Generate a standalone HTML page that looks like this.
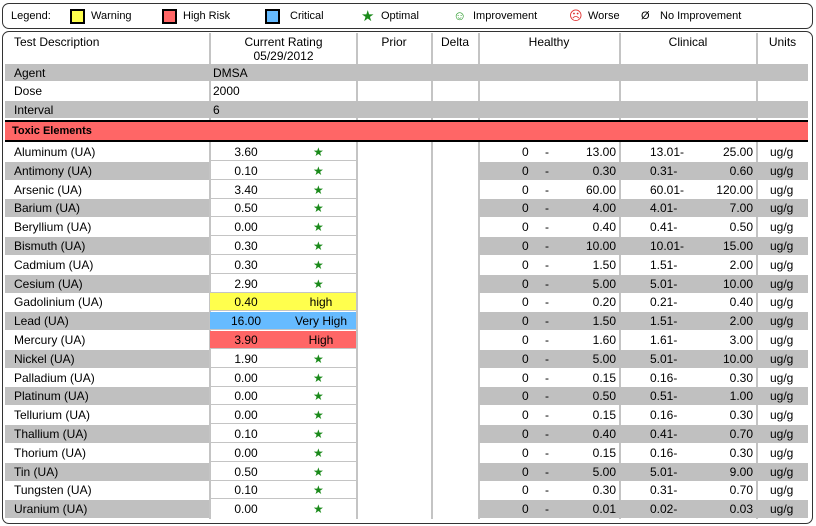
<!DOCTYPE html>
<html><head><meta charset="utf-8"><style>
*{margin:0;padding:0;box-sizing:border-box}
body{width:816px;height:526px;background:#fff;font-family:"Liberation Sans",Arial,sans-serif;font-size:12px;color:#000;position:relative;overflow:hidden}
.a{position:absolute}
.leg{left:2px;top:3px;width:811px;height:26px;border:1px solid #333;border-radius:7px}
.li{position:absolute;top:6px;font-size:11px}
.sw{position:absolute;top:5px;width:15px;height:15px;border:2px solid #000}
.frame{left:2px;top:31px;width:811px;height:493px;border:1px solid #333;border-radius:7px}
.vl{position:absolute;top:33px;height:486px;width:2px;background:#c4c4c4}
.r{position:absolute;left:5px;width:803px;height:19px}
.c{position:absolute;top:0;height:18px;line-height:18px;white-space:nowrap}
.g{background:#c0c0c0}
.nm{left:0;width:204px;padding-left:9px}
.rt{left:205px;width:146px;border-bottom:1px solid #c4c4c4}
.v{position:absolute;left:0;width:72px;text-align:center}
.st{position:absolute;left:103px;width:2px;color:#1a8a1a;font-size:12px}
.tx{position:absolute;left:75px;width:72px;text-align:center}
.rg{left:474px;width:329px}
.h0{position:absolute;left:43px}
.hd{position:absolute;left:66px}
.hh{position:absolute;right:192px;text-align:right}
.cl{position:absolute;left:171px}
.ch{position:absolute;right:55px;text-align:right}
.u{position:absolute;left:291px}
</style></head><body>
<div class="a leg">
<span class="li" style="left:8px">Legend:</span>
<span class="sw" style="left:67px;background:#ffff4d"></span><span class="li" style="left:88px">Warning</span>
<span class="sw" style="left:159px;background:#ff6666"></span><span class="li" style="left:180px">High Risk</span>
<span class="sw" style="left:262px;background:#66bbff"></span><span class="li" style="left:287px">Critical</span>
<span class="li" style="left:358px;color:#1a8a1a;font-size:15px;top:3px">★</span><span class="li" style="left:378px">Optimal</span>
<span class="li" style="left:450px;color:#2a9a2a;font-size:13px;top:4px">☺</span><span class="li" style="left:470px">Improvement</span>
<span class="li" style="left:566px;color:#e03030;font-size:13px;top:4px">☹</span><span class="li" style="left:585px">Worse</span>
<span class="li" style="left:638px">Ø</span><span class="li" style="left:657px">No Improvement</span>
</div>
<div class="a frame"></div>
<div class="vl" style="left:209px"></div>
<div class="vl" style="left:356px"></div>
<div class="vl" style="left:431px"></div>
<div class="vl" style="left:478px"></div>
<div class="vl" style="left:619px"></div>
<div class="vl" style="left:756px"></div>
<div class="a" style="left:14px;top:35px">Test Description</div>
<div class="a" style="left:211px;top:35px;width:145px;text-align:center;line-height:14px">Current Rating<br>05/29/2012</div>
<div class="a" style="left:357px;top:35px;width:74px;text-align:center">Prior</div>
<div class="a" style="left:432px;top:35px;width:46px;text-align:center">Delta</div>
<div class="a" style="left:479px;top:35px;width:140px;text-align:center">Healthy</div>
<div class="a" style="left:620px;top:35px;width:136px;text-align:center">Clinical</div>
<div class="a" style="left:757px;top:35px;width:51px;text-align:center">Units</div>
<div class="a g" style="left:5px;top:64px;width:803px;height:17px"></div>
<div class="a g" style="left:5px;top:101px;width:803px;height:17px"></div>
<div class="a" style="left:14px;top:66px">Agent</div><div class="a" style="left:213px;top:66px">DMSA</div>
<div class="a" style="left:14px;top:84px">Dose</div><div class="a" style="left:213px;top:84px">2000</div>
<div class="a" style="left:14px;top:103px">Interval</div><div class="a" style="left:213px;top:103px">6</div>
<div class="a" style="left:5px;top:120px;width:803px;height:22px;background:#ff6666;border-top:2px solid #000;border-bottom:2px solid #000;font-weight:bold;font-size:11px;line-height:18px;padding-left:7px;z-index:2">Toxic Elements</div>

<div class="r" style="top:143px"><div class="c nm">Aluminum (UA)</div><div class="c rt"><span class="v">3.60</span><span class="st">★</span></div><div class="c rg"><span class="h0">0</span><span class="hd">-</span><span class="hh">13.00</span><span class="cl">13.01-</span><span class="ch">25.00</span><span class="u">ug/g</span></div></div>
<div class="r" style="top:161.8px"><div class="c nm g">Antimony (UA)</div><div class="c rt"><span class="v">0.10</span><span class="st">★</span></div><div class="c rg g"><span class="h0">0</span><span class="hd">-</span><span class="hh">0.30</span><span class="cl">0.31-</span><span class="ch">0.60</span><span class="u">ug/g</span></div></div>
<div class="r" style="top:180.6px"><div class="c nm">Arsenic (UA)</div><div class="c rt"><span class="v">3.40</span><span class="st">★</span></div><div class="c rg"><span class="h0">0</span><span class="hd">-</span><span class="hh">60.00</span><span class="cl">60.01-</span><span class="ch">120.00</span><span class="u">ug/g</span></div></div>
<div class="r" style="top:199.4px"><div class="c nm g">Barium (UA)</div><div class="c rt"><span class="v">0.50</span><span class="st">★</span></div><div class="c rg g"><span class="h0">0</span><span class="hd">-</span><span class="hh">4.00</span><span class="cl">4.01-</span><span class="ch">7.00</span><span class="u">ug/g</span></div></div>
<div class="r" style="top:218.2px"><div class="c nm">Beryllium (UA)</div><div class="c rt"><span class="v">0.00</span><span class="st">★</span></div><div class="c rg"><span class="h0">0</span><span class="hd">-</span><span class="hh">0.40</span><span class="cl">0.41-</span><span class="ch">0.50</span><span class="u">ug/g</span></div></div>
<div class="r" style="top:237px"><div class="c nm g">Bismuth (UA)</div><div class="c rt"><span class="v">0.30</span><span class="st">★</span></div><div class="c rg g"><span class="h0">0</span><span class="hd">-</span><span class="hh">10.00</span><span class="cl">10.01-</span><span class="ch">15.00</span><span class="u">ug/g</span></div></div>
<div class="r" style="top:255.8px"><div class="c nm">Cadmium (UA)</div><div class="c rt"><span class="v">0.30</span><span class="st">★</span></div><div class="c rg"><span class="h0">0</span><span class="hd">-</span><span class="hh">1.50</span><span class="cl">1.51-</span><span class="ch">2.00</span><span class="u">ug/g</span></div></div>
<div class="r" style="top:274.6px"><div class="c nm g">Cesium (UA)</div><div class="c rt"><span class="v">2.90</span><span class="st">★</span></div><div class="c rg g"><span class="h0">0</span><span class="hd">-</span><span class="hh">5.00</span><span class="cl">5.01-</span><span class="ch">10.00</span><span class="u">ug/g</span></div></div>
<div class="r" style="top:293.4px"><div class="c nm">Gadolinium (UA)</div><div class="c rt" style="background:#ffff4d"><span class="v">0.40</span><span class="tx">high</span></div><div class="c rg"><span class="h0">0</span><span class="hd">-</span><span class="hh">0.20</span><span class="cl">0.21-</span><span class="ch">0.40</span><span class="u">ug/g</span></div></div>
<div class="r" style="top:312.2px"><div class="c nm g">Lead (UA)</div><div class="c rt" style="background:#66bbff"><span class="v">16.00</span><span class="tx">Very High</span></div><div class="c rg g"><span class="h0">0</span><span class="hd">-</span><span class="hh">1.50</span><span class="cl">1.51-</span><span class="ch">2.00</span><span class="u">ug/g</span></div></div>
<div class="r" style="top:331px"><div class="c nm">Mercury (UA)</div><div class="c rt" style="background:#ff6666"><span class="v">3.90</span><span class="tx">High</span></div><div class="c rg"><span class="h0">0</span><span class="hd">-</span><span class="hh">1.60</span><span class="cl">1.61-</span><span class="ch">3.00</span><span class="u">ug/g</span></div></div>
<div class="r" style="top:349.8px"><div class="c nm g">Nickel (UA)</div><div class="c rt"><span class="v">1.90</span><span class="st">★</span></div><div class="c rg g"><span class="h0">0</span><span class="hd">-</span><span class="hh">5.00</span><span class="cl">5.01-</span><span class="ch">10.00</span><span class="u">ug/g</span></div></div>
<div class="r" style="top:368.6px"><div class="c nm">Palladium (UA)</div><div class="c rt"><span class="v">0.00</span><span class="st">★</span></div><div class="c rg"><span class="h0">0</span><span class="hd">-</span><span class="hh">0.15</span><span class="cl">0.16-</span><span class="ch">0.30</span><span class="u">ug/g</span></div></div>
<div class="r" style="top:387.4px"><div class="c nm g">Platinum (UA)</div><div class="c rt"><span class="v">0.00</span><span class="st">★</span></div><div class="c rg g"><span class="h0">0</span><span class="hd">-</span><span class="hh">0.50</span><span class="cl">0.51-</span><span class="ch">1.00</span><span class="u">ug/g</span></div></div>
<div class="r" style="top:406.2px"><div class="c nm">Tellurium (UA)</div><div class="c rt"><span class="v">0.00</span><span class="st">★</span></div><div class="c rg"><span class="h0">0</span><span class="hd">-</span><span class="hh">0.15</span><span class="cl">0.16-</span><span class="ch">0.30</span><span class="u">ug/g</span></div></div>
<div class="r" style="top:425px"><div class="c nm g">Thallium (UA)</div><div class="c rt"><span class="v">0.10</span><span class="st">★</span></div><div class="c rg g"><span class="h0">0</span><span class="hd">-</span><span class="hh">0.40</span><span class="cl">0.41-</span><span class="ch">0.70</span><span class="u">ug/g</span></div></div>
<div class="r" style="top:443.8px"><div class="c nm">Thorium (UA)</div><div class="c rt"><span class="v">0.00</span><span class="st">★</span></div><div class="c rg"><span class="h0">0</span><span class="hd">-</span><span class="hh">0.15</span><span class="cl">0.16-</span><span class="ch">0.30</span><span class="u">ug/g</span></div></div>
<div class="r" style="top:462.6px"><div class="c nm g">Tin (UA)</div><div class="c rt"><span class="v">0.50</span><span class="st">★</span></div><div class="c rg g"><span class="h0">0</span><span class="hd">-</span><span class="hh">5.00</span><span class="cl">5.01-</span><span class="ch">9.00</span><span class="u">ug/g</span></div></div>
<div class="r" style="top:481.4px"><div class="c nm">Tungsten (UA)</div><div class="c rt"><span class="v">0.10</span><span class="st">★</span></div><div class="c rg"><span class="h0">0</span><span class="hd">-</span><span class="hh">0.30</span><span class="cl">0.31-</span><span class="ch">0.70</span><span class="u">ug/g</span></div></div>
<div class="r" style="top:500.2px"><div class="c nm g">Uranium (UA)</div><div class="c rt" style="border-bottom:none"><span class="v">0.00</span><span class="st">★</span></div><div class="c rg g"><span class="h0">0</span><span class="hd">-</span><span class="hh">0.01</span><span class="cl">0.02-</span><span class="ch">0.03</span><span class="u">ug/g</span></div></div>
</body></html>
